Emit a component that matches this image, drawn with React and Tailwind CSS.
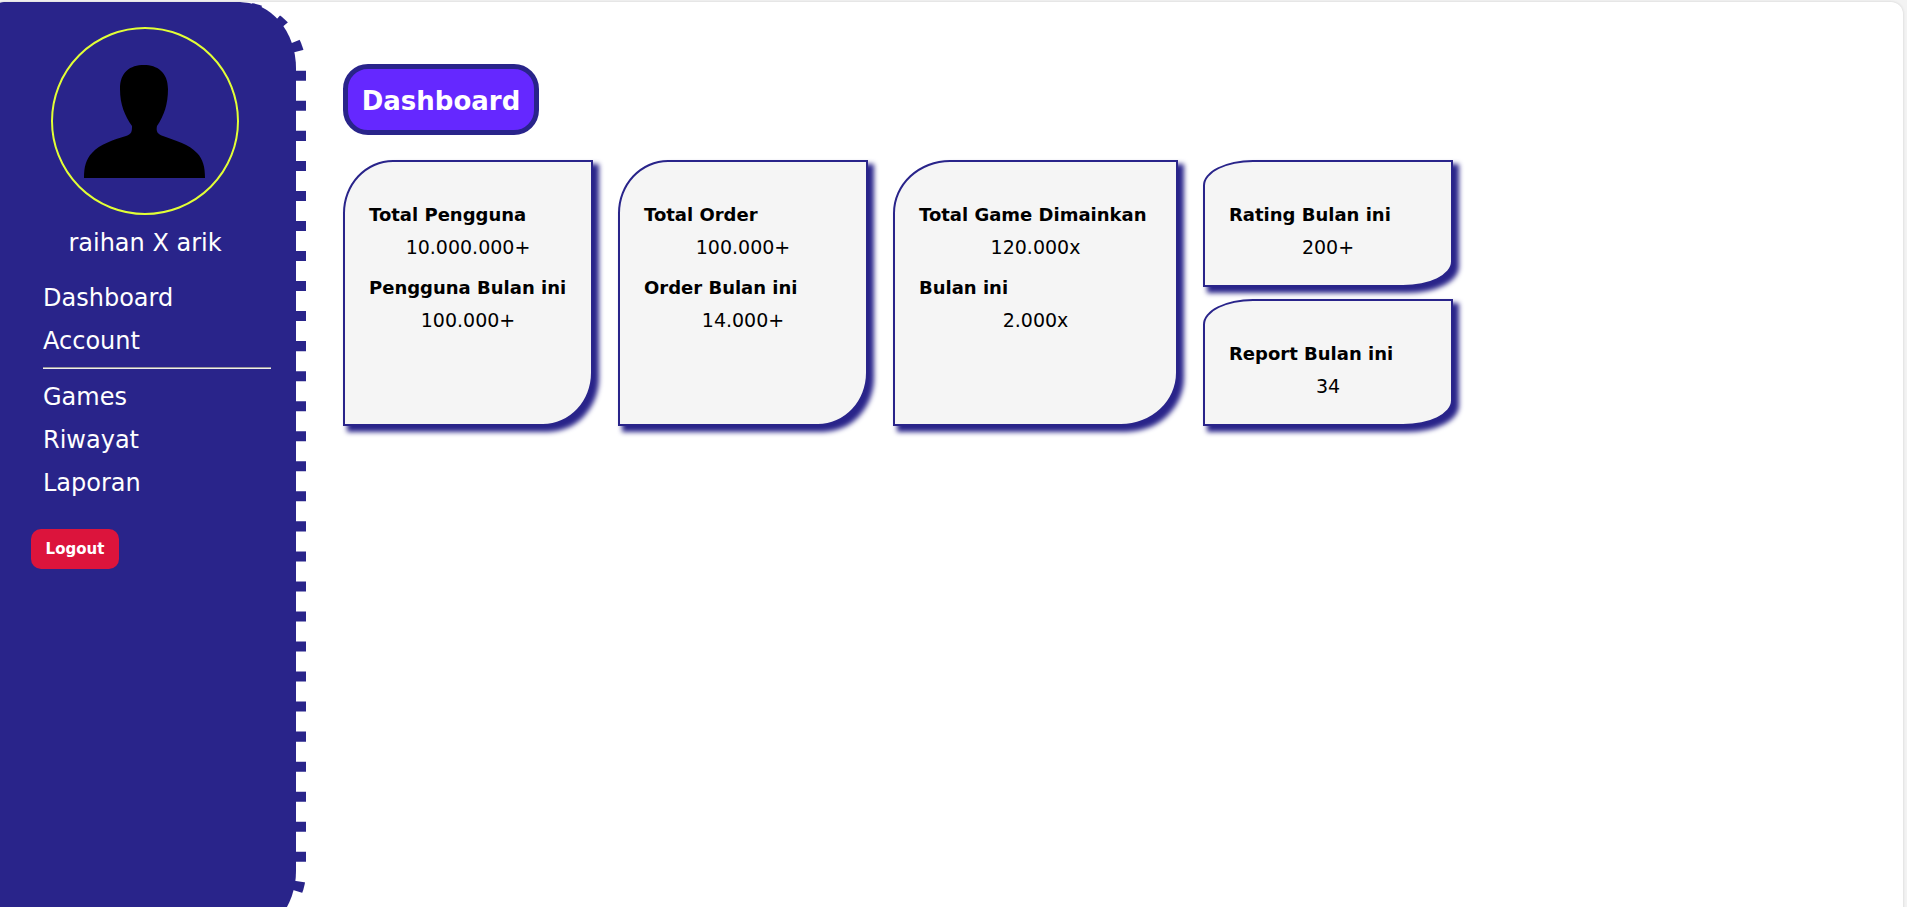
const mainLinks = ['Dashboard', 'Account'];
const gameLinks = ['Games', 'Riwayat', 'Laporan'];

const cards = [
  {
    width: 'min-w-[250px]',
    stats: [
      { label: 'Total Pengguna', value: '10.000.000+' },
      { label: 'Pengguna Bulan ini', value: '100.000+' },
    ],
  },
  {
    width: 'min-w-[250px]',
    stats: [
      { label: 'Total Order', value: '100.000+' },
      { label: 'Order Bulan ini', value: '14.000+' },
    ],
  },
  {
    width: 'min-w-[285px]',
    stats: [
      { label: 'Total Game Dimainkan', value: '120.000x' },
      { label: 'Bulan ini', value: '2.000x' },
    ],
  },
];

const smallCards = [
  { label: 'Rating Bulan ini', value: '200+' },
  { label: 'Report Bulan ini', value: '34' },
];

function Avatar() {
  return (
    <div className="flex size-[188px] items-center justify-center self-center rounded-full border-2 border-[#e2ff36]">
      <svg viewBox="0 0 122 113" className="h-[113px] w-[122px]" role="img" aria-label="Avatar">
        <path
          d="M60 0C73 0 84 7 84 24C84 39 80 51 73 61C72 66 73 69 79 71C92 76 105 79 113 88C119 94 121 102 121 113H0C0 102 2 94 8 88C16 79 29 75 42 71C48 69 48 66 48 61C41 51 36 40 36 24C36 7 46 0 60 0Z"
          fill="#000"
        />
      </svg>
    </div>
  );
}

function NavList({ items }) {
  return (
    <ul>
      {items.map((item) => (
        <li key={item} className="h-[43px] text-2xl leading-[43px]">
          <a href="#">{item}</a>
        </li>
      ))}
    </ul>
  );
}

function Sidebar() {
  return (
    <aside className="flex h-[calc(100vh+28px)] w-[314px] shrink-0 flex-col rounded-r-[66px] border-r-[10px] border-dashed border-white bg-[#29248a] pl-2 pt-[25px] text-white">
      <div className="flex flex-col pr-[6px]">
        <Avatar />
        <p className="mt-[13px] text-center text-2xl leading-[30px]">raihan X arik</p>
      </div>
      <nav className="mt-[19px] pl-[43px] pr-[25px]">
        <NavList items={mainLinks} />
        <hr className="mb-[7px] mt-1 h-[2px] border-b border-t border-b-[#eeeeee] border-t-[#9a9a9a]" />
        <NavList items={gameLinks} />
      </nav>
      <button
        type="button"
        className="ml-[31px] mt-6 h-10 w-[88px] self-start rounded-[10px] bg-[#dc143c] text-[15px] font-bold"
      >
        Logout
      </button>
    </aside>
  );
}

function Card({ stats, className }) {
  return (
    <section
      className={`rounded-br-[20%] rounded-tl-[20%] border-2 border-[#29248a] bg-[#f5f5f5] px-6 pb-[22px] pt-[37px] shadow-[5px_5px_5px_1px_#29248a] ${className}`}
    >
      {stats.map(({ label, value }) => (
        <div key={label} className="mb-[9px] whitespace-nowrap last:mb-0">
          <h2 className="text-lg font-bold leading-8">{label}</h2>
          <p className="text-center text-[19px] leading-8">{value}</p>
        </div>
      ))}
    </section>
  );
}

export default function App() {
  return (
    <div className="h-screen overflow-hidden bg-[#f3f3f3] pr-1 pt-[2px] font-['DejaVu_Sans',sans-serif] text-black">
      <div className="-ml-2 flex h-[calc(100vh+28px)] overflow-hidden rounded-xl bg-white shadow-[0_0_3px_rgba(0,0,0,0.15)]">
        <Sidebar />
        <main className="flex flex-1 flex-col items-start pl-[37px] pt-[62px]">
          <h1 className="min-w-[196px] rounded-[25px] border-[5px] border-[#29248a] bg-[#6528ff] px-3 pt-[3px] text-center text-[26px] font-bold leading-[58px] text-white">
            Dashboard
          </h1>
          <div className="mt-[25px] flex gap-[25px]">
            {cards.map(({ width, stats }) => (
              <Card key={stats[0].label} stats={stats} className={width} />
            ))}
            <div className="flex flex-col gap-3">
              {smallCards.map((stat) => (
                <Card key={stat.label} stats={[stat]} className="min-w-[250px]" />
              ))}
            </div>
          </div>
        </main>
      </div>
    </div>
  );
}
